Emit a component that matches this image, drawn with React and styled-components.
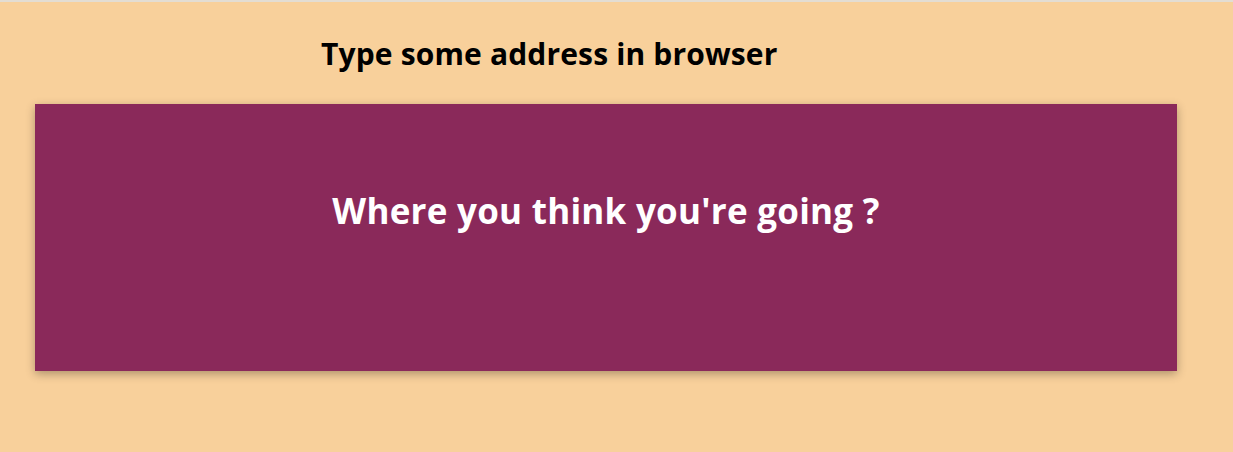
import React from "react"
import styled, { createGlobalStyle } from "styled-components"

const GlobalStyle = createGlobalStyle`
  html, body {
    margin: 0;
    padding: 0;
    background: #f8d09b;
  }
  body {
    font-family: "Open Sans", "Noto Sans", sans-serif;
    min-height: 452px;
    border-top: 2px solid #e3ddd3;
    box-sizing: border-box;
  }
`

const Page = styled.main`
  display: flex;
  flex-direction: column;
  padding: 0 56px 0 35px;
`

const Heading = styled.h1`
  margin: 32px 0 0 286px;
  font-size: 30px;
  line-height: 40px;
  font-weight: 700;
  color: #000;
  letter-spacing: 0.15px;
`

const Card = styled.section`
  margin-top: 30px;
  height: 267px;
  background: #8a295a;
  box-shadow: 0 3px 9px rgba(0, 0, 0, 0.3);
  display: flex;
  justify-content: center;
  align-items: flex-start;
  padding-top: 85px;
  box-sizing: border-box;
`

const Message = styled.h2`
  margin: 0;
  font-size: 35px;
  line-height: 44px;
  font-weight: 700;
  color: #fff;
  letter-spacing: 0.25px;
`

const App = () => {
  return (
    <>
      <GlobalStyle />
      <Page>
        <Heading>Type some address in browser</Heading>
        <Card>
          <Message>Where you think you're going ?</Message>
        </Card>
      </Page>
    </>
  )
}

export default App
